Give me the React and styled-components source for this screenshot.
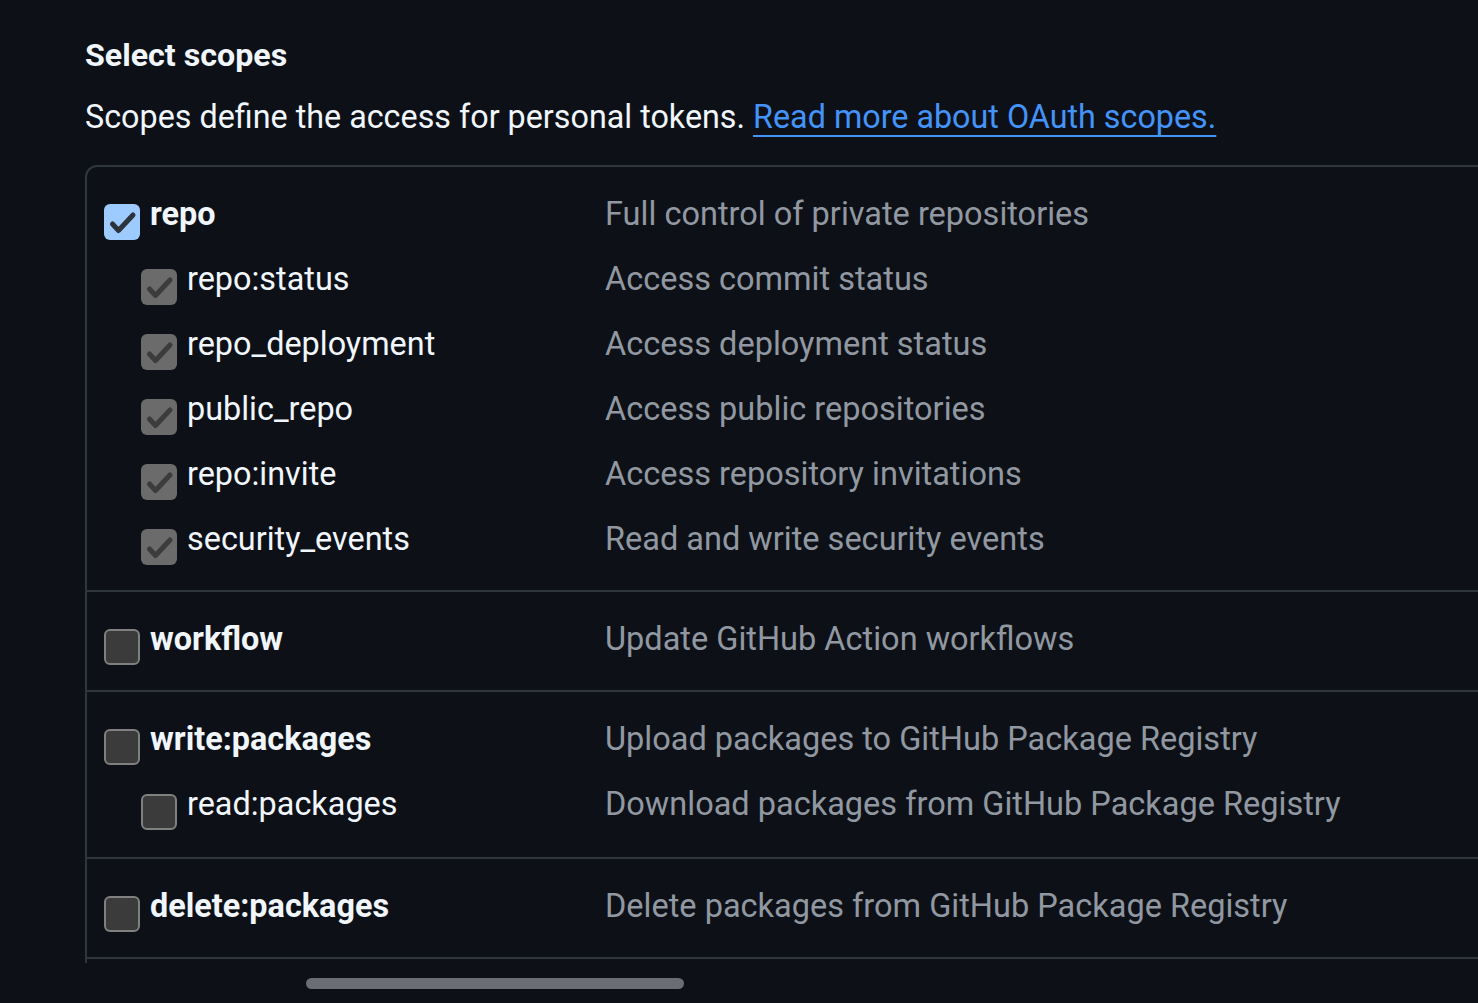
import React from 'react';
import styled, { createGlobalStyle } from 'styled-components';

const GlobalStyle = createGlobalStyle`
  html, body {
    margin: 0;
    padding: 0;
    background: #0d1117;
    overflow: hidden;
  }
  body {
    font-family: Roboto, "Noto Sans", "Liberation Sans", sans-serif;
    color: #e6edf3;
  }
`;

const Page = styled.div`
  width: 1478px;
  height: 1003px;
  padding: 35px 0 0 85px;
  box-sizing: border-box;
  overflow: hidden;
`;

const Heading = styled.h2`
  margin: 0;
  font-size: 32.2px;
  line-height: 40px;
  font-weight: 700;
  color: #f0f6fc;
`;

const Lead = styled.p`
  margin: 22px 0 0;
  font-size: 32.3px;
  line-height: 40px;
  color: #f0f6fc;
  white-space: nowrap;

  a {
    color: #4493f8;
    text-decoration: underline;
    text-decoration-thickness: 2px;
    text-underline-offset: 7px;
  }
`;

const ScopeBox = styled.div`
  margin-top: 28px;
  width: 1600px;
  height: 798px;
  border: 2px solid #30363d;
  border-bottom: none;
  border-radius: 12px 12px 0 0;
  box-sizing: border-box;
  overflow: hidden;
`;

const Group = styled.div`
  padding: 14px 0 ${p => (p.tall ? '21px' : '19px')};
  border-bottom: 2px solid #30363d;
`;

const Row = styled.div`
  display: grid;
  grid-template-columns: ${p => (p.sub ? '464px' : '501px')} 1fr;
  align-items: center;
  height: 65px;
  padding-left: ${p => (p.sub ? '54px' : '17px')};
`;

const Label = styled.label`
  display: flex;
  align-items: center;
  gap: 10px;
  font-size: 32.4px;
  line-height: 40px;
  font-weight: ${p => (p.sub ? 400 : 700)};
  color: #f0f6fc;
  white-space: nowrap;
`;

const Box = styled.span`
  flex: none;
  display: flex;
  align-items: center;
  justify-content: center;
  width: 36px;
  height: 36px;
  margin-top: 16px;
  box-sizing: border-box;
  border-radius: 6px;
  background: ${p => (p.state === 'on' ? '#9ecbff' : p.state === 'locked' ? '#6b6b6b' : '#3b3b3b')};
  border: ${p => (p.state === 'off' ? '2px solid #808080' : 'none')};
`;

const Desc = styled.span`
  font-size: 32.5px;
  line-height: 40px;
  color: #9198a1;
  white-space: nowrap;
`;

const ScrollThumb = styled.div`
  margin: 15px 0 0 221px;
  width: 378px;
  height: 11px;
  border-radius: 6px;
  background: #6a6d71;
`;

const Check = ({ color }) => (
  <svg width="36" height="36" viewBox="0 0 36 36">
    <path d="M8.5 20 L14.5 26.5 L29 11" fill="none" stroke={color} strokeWidth="5" strokeLinecap="round" strokeLinejoin="round" />
  </svg>
);

const CheckBox = ({ state }) => (
  <Box state={state}>
    {state === 'on' && <Check color="#2d333b" />}
    {state === 'locked' && <Check color="#3c3c3c" />}
  </Box>
);

const groups = [
  [
    { name: 'repo', desc: 'Full control of private repositories', state: 'on' },
    { name: 'repo:status', desc: 'Access commit status', state: 'locked', sub: true },
    { name: 'repo_deployment', desc: 'Access deployment status', state: 'locked', sub: true },
    { name: 'public_repo', desc: 'Access public repositories', state: 'locked', sub: true },
    { name: 'repo:invite', desc: 'Access repository invitations', state: 'locked', sub: true },
    { name: 'security_events', desc: 'Read and write security events', state: 'locked', sub: true }
  ],
  [{ name: 'workflow', desc: 'Update GitHub Action workflows', state: 'off' }],
  [
    { name: 'write:packages', desc: 'Upload packages to GitHub Package Registry', state: 'off' },
    { name: 'read:packages', desc: 'Download packages from GitHub Package Registry', state: 'off', sub: true }
  ],
  [{ name: 'delete:packages', desc: 'Delete packages from GitHub Package Registry', state: 'off' }]
];

const App = () => (
  <Page>
    <GlobalStyle />
    <Heading>Select scopes</Heading>
    <Lead>
      Scopes define the access for personal tokens. <a href="#scopes">Read more about OAuth scopes.</a>
    </Lead>
    <ScopeBox>
      {groups.map(rows => (
        <Group key={rows[0].name} tall={rows.length === 2}>
          {rows.map(row => (
            <Row key={row.name} sub={row.sub}>
              <Label sub={row.sub}>
                <CheckBox state={row.state} />
                {row.name}
              </Label>
              <Desc>{row.desc}</Desc>
            </Row>
          ))}
        </Group>
      ))}
    </ScopeBox>
    <ScrollThumb />
  </Page>
);

export default App;
